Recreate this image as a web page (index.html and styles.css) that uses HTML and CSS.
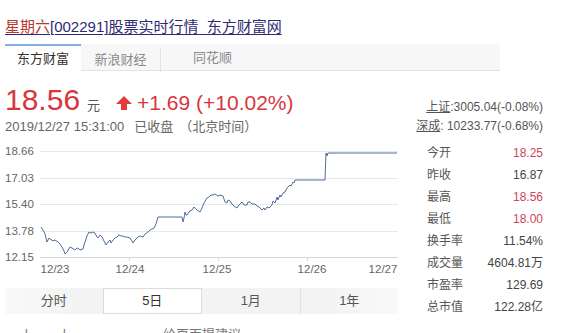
FILE: index.html
```html
<!DOCTYPE html>
<html lang="zh-CN">
<head>
<meta charset="utf-8">
<title>星期六[002291]股票实时行情</title>
<link rel="stylesheet" href="styles.css">
</head>
<body>
<div class="page">
  <h1 class="title"><em>星期六</em>[002291]股票实时行情_东方财富网</h1>
  <div class="tabs">
    <div class="tab tab-active">东方财富</div>
    <div class="tab tab-mid">新浪财经</div>
    <div class="tab tab-last">同花顺</div>
  </div>
  <div class="main">
    <div class="left">
      <div class="price-row">
        <span class="price">18.56</span>
        <span class="unit">元</span>
        <svg class="arrow" width="16" height="14" viewBox="0 0 16 14"><polygon points="8,0 16,8 11,8 11,14 5,14 5,8 0,8" fill="#e33b3b"/></svg>
        <span class="change">+1.69 (+10.02%)</span>
      </div>
      <div class="date-row">
        <span>2019/12/27 15:31:00</span>
        <span class="closed">已收盘</span>
        <span class="tz">（北京时间）</span>
      </div>
      <svg class="chart" width="395" height="140" viewBox="0 0 395 140">
        <g stroke="#e8e8e8" stroke-width="1">
          <line x1="35" y1="11.5" x2="393" y2="11.5"/>
          <line x1="35" y1="38.5" x2="393" y2="38.5"/>
          <line x1="35" y1="64.5" x2="393" y2="64.5"/>
          <line x1="35" y1="91.5" x2="393" y2="91.5"/>
        </g>
        <line x1="35" y1="117.5" x2="393" y2="117.5" stroke="#d6d6d6"/>
        <g stroke="#d6d6d6">
          <line x1="124.5" y1="117" x2="124.5" y2="121"/>
          <line x1="213.5" y1="117" x2="213.5" y2="121"/>
          <line x1="302.5" y1="117" x2="302.5" y2="121"/>
        </g>
        <g class="axis" fill="#666">
          <text x="0" y="15">18.66</text>
          <text x="0" y="42">17.03</text>
          <text x="0" y="68">15.40</text>
          <text x="0" y="95">13.78</text>
          <text x="0" y="121">12.15</text>
          <text x="50" y="133" text-anchor="middle">12/23</text>
          <text x="125" y="133" text-anchor="middle">12/24</text>
          <text x="212" y="133" text-anchor="middle">12/25</text>
          <text x="307" y="133" text-anchor="middle">12/26</text>
          <text x="378" y="133" text-anchor="middle">12/27</text>
        </g>
        <polyline fill="none" stroke="#4f6d9c" stroke-width="1" stroke-linejoin="round"
          points="36,87 38,90 40,94 42,102 44,98 45,99 47,100 48,101 50,100 53,102 55,104 57,107 59,111 60,114 62,112 65,107 67,108 70,110 72,108 73,108 75,110 78,109 79,105 80,102 82,96 84,92 86,93 88,92 90,93 92,97 93,98 95,95 97,97 99,101 101,105 103,102 105,100 106,103 108,100 110,98 112,97 114,95 116,96 118,96 120,97 122,97 125,98 127,101 128,103 130,100 133,97 135,96 138,97 140,94 143,92 145,90 147,89 149,88 151,84 153,77 177,77 178,82 179,78 180,72 181,75 182,75 184,72 185,71 187,70 189,67 190,68 192,70 195,72 197,68 199,63 202,58 204,57 206,55 208,55 210,54 213,56 215,55 218,56 219,59 220,62 222,63 223,60 225,61 227,64 229,66 232,68 234,65 237,62 239,65 242,65 243,62 245,62 247,64 250,64 252,66 254,67 257,70 259,68 260,70 262,67 264,68 267,65 268,61 270,63 272,57 273,60 275,55 276,57 278,53 280,52 282,48 283,47 285,45 286,46 288,42 289,43 290,40 320,40 321,13 322,16 323,13 392,13"/>
      </svg>
      <div class="periods">
        <div class="period">分时</div>
        <div class="period period-active">5日</div>
        <div class="period">1月</div>
        <div class="period period-sep">1年</div>
      </div>
      <div class="footer-row">
        <span class="foot-mark">卜</span>
        <span class="foot-mark">卜</span>
        <span class="feedback">给页面提建议</span>
      </div>
    </div>
    <div class="right">
      <div class="index-row"><span><u>上证</u>:3005.04(-0.08%)</span></div>
      <div class="index-row"><span><u>深成</u>: 10233.77(-0.68%)</span></div>
      <div class="stats">
        <div class="stat"><span class="label">今开</span><span class="val up">18.25</span></div>
        <div class="stat"><span class="label">昨收</span><span class="val">16.87</span></div>
        <div class="stat"><span class="label">最高</span><span class="val up">18.56</span></div>
        <div class="stat"><span class="label">最低</span><span class="val up">18.00</span></div>
        <div class="stat"><span class="label">换手率</span><span class="val">11.54%</span></div>
        <div class="stat"><span class="label">成交量</span><span class="val">4604.81万</span></div>
        <div class="stat"><span class="label">市盈率</span><span class="val">129.69</span></div>
        <div class="stat"><span class="label">总市值</span><span class="val">122.28亿</span></div>
      </div>
    </div>
  </div>
</div>
</body>
</html>
```
FILE: styles.css
```css
html, body {
  margin: 0;
  padding: 0;
  background: #fff;
}
body {
  width: 570px;
  height: 333px;
  overflow: hidden;
  font-family: "Liberation Sans", "Noto Sans CJK SC", sans-serif;
  color: #333;
}
.page {
  padding: 17px 0 0 5px;
}
.title {
  margin: 0;
  font-size: 15px;
  line-height: 20px;
  font-weight: normal;
  color: #2e2b72;
  text-decoration: underline;
  text-decoration-thickness: 1px;
  text-underline-offset: 2px;
}
.title em {
  font-style: normal;
  color: #b43a30;
}
.tabs {
  margin-top: 7px;
  width: 495px;
  height: 26px;
  background: #f7f7f7;
  border-bottom: 1px solid #e4e4e4;
  display: flex;
}
.tab {
  font-size: 13px;
  line-height: 24px;
  height: 24px;
  padding-top: 2px;
  color: #8a8a8a;
}
.tab-active {
  width: 76px;
  text-align: center;
  background: #fff;
  color: #333;
  height: 25px;
  padding-top: 0;
  line-height: 25px;
  border-top: 2px solid #86b0da;
  margin-bottom: -1px;
}
.tab-mid {
  width: 79px;
  text-align: center;
  border-right: 1px solid #e2e2e2;
  margin-top: 4px;
  height: 22px;
  line-height: 20px;
}
.tab-last {
  padding-left: 32px;
}
.main {
  display: flex;
  margin-top: 14px;
}
.left {
  width: 395px;
}
.price-row {
  display: flex;
  align-items: baseline;
  height: 30px;
}
.price {
  font-size: 30px;
  line-height: 30px;
  color: #d7363c;
}
.unit {
  font-size: 13px;
  margin-left: 7px;
  color: #555;
}
.arrow {
  margin-left: 16px;
  margin-bottom: 5px;
}
.change {
  margin-left: 5px;
  font-size: 21px;
  color: #d7363c;
}
.date-row {
  margin-top: 3px;
  font-size: 13px;
  line-height: 18px;
  color: #666;
  display: flex;
}
.closed {
  margin-left: 10px;
}
.tz {
  margin-left: 6px;
}
.chart {
  display: block;
  margin-top: 4px;
}
.axis text {
  font-family: "Liberation Sans", sans-serif;
  font-size: 11.5px;
}
.periods {
  margin-top: 8px;
  height: 26px;
  width: 393px;
  display: flex;
  background: linear-gradient(to right, #f9f9f9, #f3f3f3 20%, #f3f3f3 80%, #f9f9f9);
}
.period {
  flex: 1;
  text-align: center;
  font-size: 13px;
  line-height: 26px;
  color: #555;
}
.period-active {
  background: #fff;
  border: 1px solid #dcdcdc;
  line-height: 24px;
  color: #333;
}
.period-sep {
  border-left: 1px solid #e2e2e2;
}
.footer-row {
  margin-top: 12px;
  display: flex;
  font-size: 13px;
  line-height: 18px;
  color: #777;
}
.foot-mark {
  margin-left: 16px;
  width: 22px;
}
.feedback {
  margin-left: 82px;
}
.right {
  margin-left: 20px;
  width: 123px;
  padding-top: 13px;
  font-size: 12px;
  color: #555;
}
.index-row {
  display: flex;
  justify-content: flex-end;
  white-space: nowrap;
  line-height: 19px;
}
.index-row u {
  text-decoration-thickness: 1px;
}
.stats {
  margin-top: 6px;
}
.stat {
  display: flex;
  justify-content: space-between;
  line-height: 22px;
  padding-left: 7px;
}
.label {
  color: #555;
}
.val {
  color: #444;
}
.val.up {
  color: #cf4457;
}
```
